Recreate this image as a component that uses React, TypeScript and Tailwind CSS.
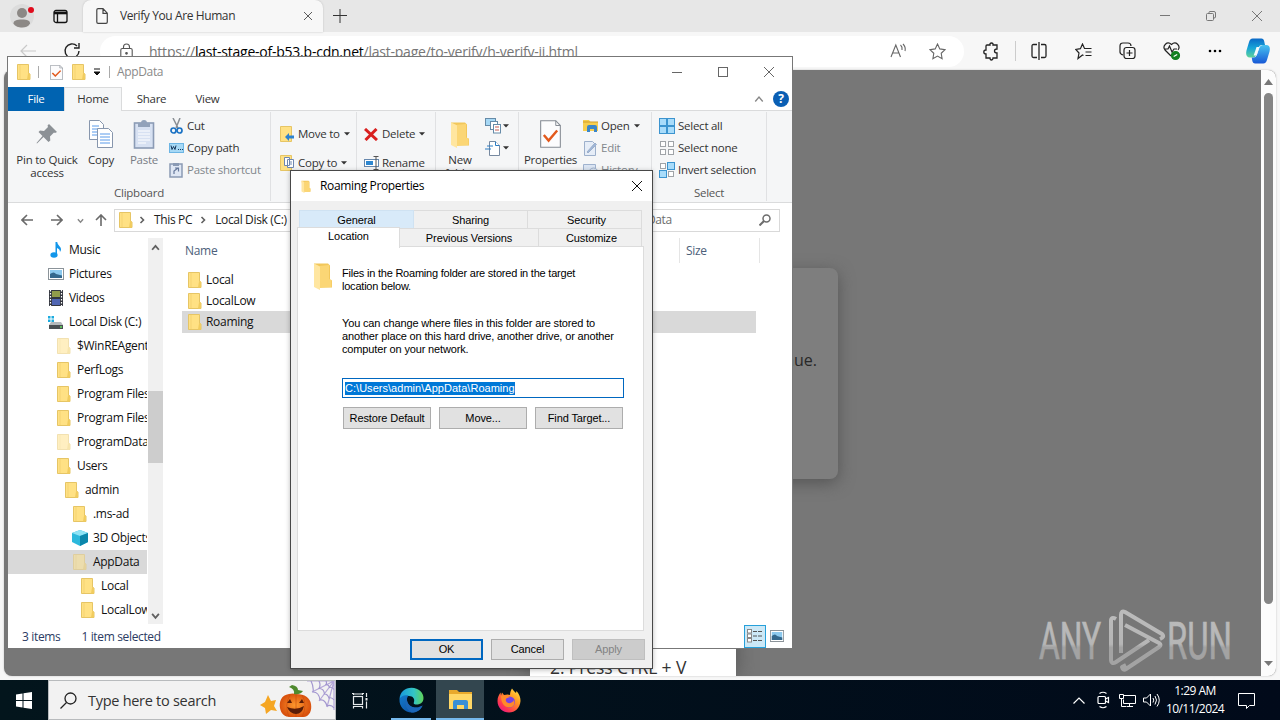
import React from 'react';

type IconProps = { className?: string };

// ---------- Folder icons ----------
const Folder: React.FC<{ faded?: boolean }> = ({ faded }) => (
  <svg width="16" height="16" viewBox="0 0 16 16" className={faded ? 'shrink-0 opacity-50' : 'shrink-0'}>
    <path d="M1.500.500h11v9l1.500.500v5.500h-12.500z" fill="#ffe184" stroke="#e6c565" />
    <path d="M12 9.500l1.500-.500.500 6.500H11z" fill="#f1cc5e" />
    <path d="M4 1v14" stroke="#f5d373" />
  </svg>
);

const OpenFolder: React.FC<{ width: number; height: number }> = ({ width, height }) => (
  <svg width={width} height={height} viewBox="0 0 20 28" preserveAspectRatio="none">
    <path d="M1 1.500h14l2 2v14l2 1v7H5z" fill="#f2c75b" />
    <path d="M1 1.500l6 3v23.500l-6-3z" fill="#ffe6a0" />
    <path d="M7 4l9-1v14l2.500 1v7L7 26z" fill="#fbd675" />
  </svg>
);

const Caret: React.FC<IconProps> = ({ className }) => (
  <svg width="6" height="4" viewBox="0 0 6 4" className={className}><path d="M0 .3h6L3 3.6z" fill="#333" /></svg>
);

const Chevron: React.FC<{ dir: 'up' | 'down' | 'right'; size?: number; color?: string; weight?: number }> = ({
  dir, size = 8, color = '#606060', weight = 1.6,
}) => {
  const paths = { up: 'M1 6l3-3.5L7 6', down: 'M1 2.5L4 6l3-3.5', right: 'M2.5 1l3 3-3 3' };
  return (
    <svg width={size} height={size} viewBox="0 0 8 8" fill="none" stroke={color} strokeWidth={weight} className="shrink-0">
      <path d={paths[dir]} />
    </svg>
  );
};

const CloseX: React.FC<{ size: number; color: string }> = ({ size, color }) => (
  <svg width={size} height={size} viewBox="0 0 10 10" stroke={color} strokeWidth="1"><path d="M0 0l10 10M10 0L0 10" /></svg>
);

const PropertiesDoc: React.FC<{ width: number; height: number }> = ({ width, height }) => (
  <svg width={width} height={height} viewBox="0 0 22 28" preserveAspectRatio="none" fill="none">
    <path d="M.7.7h15.8l4.8 4.8v21.8H.7z" fill="#fcfcfd" stroke="#858b93" strokeWidth="1.1" />
    <path d="M16.5.7v4.8h4.8" stroke="#858b93" />
    <path d="M4 15l5 5.5 9-10" stroke="#e2591c" strokeWidth="2.6" />
  </svg>
);

// ---------- Edge browser ----------
const toolIcon = 'fill-none stroke-[#222]';

const BrowserTabs: React.FC = () => (
  <div className="flex h-8 bg-[#e7e7e7] text-[#333]">
    <div className="flex w-[83px] items-center pl-[10px]">
      <svg width="27" height="28" viewBox="0 0 27 28">
        <circle cx="12" cy="14" r="12" fill="#dcdcdc" />
        <circle cx="12" cy="11" r="5" fill="#8c8885" />
        <path d="M3.500 21.500c0-3 3-4 8.500-4s8 1 8 4c-1.500 3-5 4-8 4s-7-1-8.500-4z" fill="#8c8885" />
        <circle cx="21" cy="8" r="3" fill="#e00b1c" />
      </svg>
      <svg width="15" height="15" viewBox="0 0 15 15" fill="none" stroke="#111" strokeWidth="1.3" className="ml-[16px]">
        <rect x="1" y="1.500" width="13" height="12" rx="2" /><path d="M1 4h13" strokeWidth="2.600" /><path d="M4.500 5v8" />
      </svg>
    </div>
    <div className="flex w-[240px] items-center rounded-t-lg bg-[#f7f7f7] pl-[13px] shadow-[0_0_2px_#bbb]">
      <svg width="12" height="16" viewBox="0 0 12 16" fill="none" stroke="#444" strokeWidth="1.200">
        <path d="M.8 2q0-1.300 1.300-1.300H7l4.300 4.500V14q0 1.300-1.300 1.300H2.100Q.8 15.300.8 14zM7 1v4.300h4" />
      </svg>
      <span className="ml-[12px] grow text-[12px] tracking-[-0.4px]">Verify You Are Human</span>
      <span className="mr-[11px]"><CloseX size={8} color="#333" /></span>
    </div>
    <svg width="14" height="14" viewBox="0 0 14 14" stroke="#333" className="ml-[10px] mt-[9px]"><path d="M7 0v14M0 6.500h14" /></svg>
    <div className="ml-auto flex items-center gap-[36px] pr-[18px]">
      <svg width="10" height="10" stroke="#777"><path d="M0 4.500h10" /></svg>
      <svg width="10" height="10" viewBox="0 0 10 10" fill="none" stroke="#777"><rect x=".5" y="2.500" width="7" height="7" rx="1" /><path d="M3 2.500V1.500q0-1 1-1h4q1.500 0 1.500 1.500v4q0 1-1.500 1" /></svg>
      <CloseX size={10} color="#777" />
    </div>
  </div>
);

const BrowserToolbar: React.FC = () => (
  <div className="flex h-[38px] items-center">
    <svg width="17" height="14" viewBox="0 0 17 14" fill="none" stroke="#c9c9c9" strokeWidth="1.200" className="ml-[20px]"><path d="M16 7H1M7 1L1 7l6 6" /></svg>
    <svg width="18" height="18" viewBox="0 0 18 18" fill="none" stroke="#222" strokeWidth="1.400" className="ml-[26px]"><path d="M16 9a7 7 0 1 1-2-5M16 1v5h-5" /></svg>
    <div className="ml-[19px] flex h-[31px] w-[864px] items-center rounded-full bg-white">
      <svg width="13" height="16" viewBox="0 0 13 16" fill="none" stroke="#555" strokeWidth="1.100" className="ml-[20px]">
        <rect x=".8" y="5.500" width="11.400" height="9.700" rx="1.500" /><path d="M3.500 5.500V4a3 3 0 0 1 6 0v1.500" /><circle cx="6.500" cy="10.300" r=".8" fill="#555" />
      </svg>
      <span className="ml-[16px] grow text-[14px] tracking-[-0.23px] text-[#777]">
        https://<span className="text-black">last-stage-of-b53.b-cdn.net</span>/last-page/to-verify/h-verify-ii.html
      </span>
      <svg width="17" height="16" viewBox="0 0 17 16" fill="none" stroke="#666" strokeWidth="1.100">
        <path d="M1 14L5.800 2 10.500 14M2.700 10h6.200M10.500 2q2 1.700 1.500 5M13 1q3 3 2 7" />
      </svg>
      <svg width="17" height="17" viewBox="0 0 17 17" fill="none" stroke="#666" strokeWidth="1.100" className="mr-[18px] ml-[22px]">
        <path d="M8.500 1l2.300 4.900 5.200.7-3.800 3.700.9 5.400-4.600-2.600-4.600 2.600.9-5.400L1 6.600l5.200-.7z" />
      </svg>
    </div>
    <div className="flex items-center pl-[19px]">
      <svg width="16" height="19" viewBox="0 0 16 19" strokeWidth="1.300" className={toolIcon}>
        <path d="M4 3h3q-.3-2 1.500-2T10 3h4v4q-2.500 0-2.500 2T14 11v5h-4q0 2-1.500 2T7 16H3v-4Q.8 12 .8 10T3 8V4q0-1 1-1z" />
      </svg>
      <div className="ml-[16px] mr-[15px] h-5 w-px bg-[#ccc]" />
      <svg width="16" height="18" viewBox="0 0 16 18" strokeWidth="1.300" className={toolIcon}>
        <path d="M6 2.500H2.500q-1.500 0-1.500 1.500v10q0 1.500 1.500 1.500H6M10 2.500h3.500q1.500 0 1.500 1.500v10q0 1.500-1.500 1.500H10M8 0v18" />
      </svg>
      <svg width="17" height="17" viewBox="0 0 17 17" strokeWidth="1.200" className="ml-[28px] fill-none stroke-[#222]">
        <path d="M8.500 12.500L7.500 12l-4.500 3.500 1-5.500L.8 6.500l4.600-.8L7.500 1l2 4.500h7M10.500 9h6M10.500 12.500h6" />
      </svg>
      <svg width="17" height="18" viewBox="0 0 17 18" strokeWidth="1.200" className="ml-[27px] fill-none stroke-[#222]">
        <path d="M4 13q-3-1-3-3V4q0-3 3-3h5q3 0 3 3" /><rect x="5" y="5.500" width="11" height="11" rx="2.500" /><path d="M10.500 8v6M7.500 11h6" />
      </svg>
      <svg width="18" height="20" viewBox="0 0 18 20" strokeWidth="1.200" className="ml-[27px] fill-none stroke-[#222]">
        <path d="M8 15L2 9C-1 5 4-.5 8.500 3.500 13-.5 18 5 15 9M1 8h4l1.500-3 2.500 6 2-3h3" />
        <circle cx="12.500" cy="14.500" r="4" fill="#138020" stroke="#138020" /><path d="M10.700 15.500l3.500-2" stroke="white" />
      </svg>
      <svg width="14" height="4" viewBox="0 0 14 4" className="ml-[27px]"><circle cx="2" cy="2" r="1.300" /><circle cx="7" cy="2" r="1.300" /><circle cx="12" cy="2" r="1.300" /></svg>
      <svg width="24" height="26" viewBox="0 0 25 26" preserveAspectRatio="none" className="ml-[24px]">
        <defs>
          <linearGradient id="cpA" x1="0" y1="0" x2="0" y2="1"><stop offset="0" stopColor="#0b69c7" /><stop offset=".5" stopColor="#17a5d8" /><stop offset="1" stopColor="#5fd39a" /></linearGradient>
          <linearGradient id="cpB" x1="0" y1="0" x2="0" y2="1"><stop offset="0" stopColor="#46c3f0" /><stop offset="1" stopColor="#1858d6" /></linearGradient>
        </defs>
        <path d="M7 .5h9q2.500 0 3 3l.8 3.500H16q-2 0-3 3l-2.500 7.500q-.8 2-3 2H4q-5 0-3.500-7l2.500-8Q4 .5 7 .5z" fill="url(#cpA)" />
        <path d="M17.500 7H21q5 0 3.500 6.500L22 21.500q-1 4-4 4H9.500q-2.500 0-3-3L6 19.500h2q2.500 0 3.500-3l2.500-7Q15 7 17.500 7z" fill="url(#cpB)" />
        <path d="M11 9h3l-3 8.500H8z" fill="#f3fbfd" />
      </svg>
    </div>
  </div>
);

const Watermark: React.FC = () => (
  <svg width="194" height="64" viewBox="0 0 194 64" className="absolute top-[539px] left-[1034px]" fill="none">
    <defs>
      <linearGradient id="wm" x1="0" y1="0" x2="0" y2="64" gradientUnits="userSpaceOnUse">
        <stop offset="0" stopColor="#bcbcbc" /><stop offset=".55" stopColor="#b6b6b6" /><stop offset=".6" stopColor="#a3a3a3" /><stop offset="1" stopColor="#a3a3a3" />
      </linearGradient>
    </defs>
    <g fill="url(#wm)" stroke="url(#wm)" strokeWidth=".7" fontFamily="Roboto, sans-serif" fontSize="52">
      <text x="1" y="50" textLength="62" lengthAdjust="spacingAndGlyphs">ANY</text>
      <text x="129" y="50" textLength="65" lengthAdjust="spacingAndGlyphs">RUN</text>
    </g>
    <g stroke="url(#wm)" strokeWidth="4" strokeLinejoin="round">
      <path d="M78 10q-5-3-5 2v38q0 6 5 3l33-22" />
      <path d="M83 44V6q0-5 4-3l37 22q3 3-2 5" />
      <path d="M87 16l34 18q3 2 0 4L88 60q-3 2-4-2l4-2" />
    </g>
  </svg>
);

const Browser: React.FC = () => (
  <div className="h-[680px] bg-[#f7f7f7]">
    <BrowserTabs />
    <BrowserToolbar />
    <div className="relative ml-1 flex h-[606px] w-[1272px] overflow-hidden rounded-lg bg-[#777] shadow-[0_0_2px_#bbb]">
      <div className="absolute top-[198px] left-[436px] flex h-[211px] w-[398px] items-center justify-end rounded-lg bg-[#7e7e7e] pr-[21px] pb-[27px] text-[16px] text-[#282828] shadow-[0_4px_16px_#555]">continue.</div>
      <div className="absolute top-[560px] left-[526px] h-[46px] w-[206px] bg-white pt-[24px] pl-[20px] text-[17.5px] leading-[26px] tracking-[-0.1px] text-[#333] shadow-[0_0_20px_#555]">2. Press CTRL + V</div>
      <Watermark />
      <div className="relative ml-auto flex w-[15px] flex-col items-center bg-[#fcfcfc] pt-[9px]">
        <svg width="9" height="6" viewBox="0 0 9 6"><path d="M0 6l4.500-6L9 6z" fill="#777" /></svg>
        <div className="mt-[8px] h-[511px] w-[9px] rounded-full bg-[#858585]" />
        <svg width="9" height="5" viewBox="0 0 9 5" className="mt-[57px]"><path d="M0 0h9L4.500 5z" fill="#777" /></svg>
      </div>
    </div>
  </div>
);

// ---------- Explorer ----------
const ExplorerTitle: React.FC = () => (
  <div className="flex h-[30px] items-center pl-[8px] text-[12px] text-[#8a8a8a]">
    <Folder />
    <div className="mx-[6px] h-[12px] w-px bg-[#aaa]" />
    <span className="ml-[5px]"><PropertiesDoc width={13} height={15} /></span>
    <span className="ml-[8px]"><Folder /></span>
    <svg width="8" height="8" viewBox="0 0 8 8" className="ml-[6px]"><path d="M1 1h6M1 4h6L4 7z" fill="#111" stroke="#111" strokeWidth="1" /></svg>
    <div className="ml-[8px] h-[12px] w-px bg-[#aaa]" />
    <span className="ml-[7px] tracking-[-0.35px]">AppData</span>
    <div className="ml-auto flex items-center gap-[36px] pr-[18px]">
      <svg width="10" height="10" stroke="#666"><path d="M0 5.500h10" /></svg>
      <svg width="10" height="10" fill="none" stroke="#666"><rect x=".5" y=".5" width="9" height="9" /></svg>
      <CloseX size={10} color="#666" />
    </div>
  </div>
);

const ExplorerTabs: React.FC = () => (
  <div className="flex h-[24px] items-stretch border-b border-[#dadbdc] text-[11.5px] leading-[23px] tracking-[-0.3px] text-[#333]">
    <div className="mb-[-1px] w-[56px] bg-[#0063b1] text-center text-white">File</div>
    <div className="mb-[-1px] w-[58px] border border-b-0 border-[#dadbdc] bg-[#f5f6f7] text-center leading-[21px]">Home</div>
    <div className="w-[59px] text-center">Share</div>
    <div className="w-[53px] text-center">View</div>
    <div className="ml-auto flex items-center gap-[9px] pr-[3px]">
      <Chevron dir="up" size={10} color="#888" weight={1.1} />
      <div className="h-4 w-4 rounded-full bg-[#0a5fb4] text-center text-[12px] leading-4 font-bold text-white">?</div>
    </div>
  </div>
);

const PinIcon = () => (
  <svg width="22" height="22" viewBox="0 0 22 22"><path d="M13 1l8 8-2 1-1-.5-4 4 .3 4L12.500 19l-5-5L1 20.500l-.5-.5 6-7-4-4L4 7.500l4 .5 4-4-.5-1.500z" fill="#8c9196" /></svg>
);

const CopyIcon = () => (
  <svg width="26" height="28" viewBox="0 0 26 28" fill="#fff" stroke="#8796ad">
    <path d="M1.500.5h10l4 4v15h-14z" /><path d="M4 6h7M4 9h7M4 12h5M4 15h5" stroke="#5b9bea" />
    <path d="M9.500 8.500h11l4 4v15h-15z" /><path d="M12 14h10M12 17h10M12 20h10M12 23h10" stroke="#5b9bea" />
  </svg>
);

const PasteIcon = () => (
  <svg width="22" height="30" viewBox="0 0 22 30" fill="none">
    <rect x="1.500" y="4" width="19" height="25" fill="#d7e1f2" stroke="#8b9bb5" strokeWidth="1.600" />
    <path d="M5 4h3q0-3 3-3t3 3h3v4H5z" fill="#92a2ba" />
    <path d="M5 12h12M5 15h12M5 18h12M5 21h12M5 24h8" stroke="#fff" />
  </svg>
);

const CutIcon = () => (
  <svg width="16" height="16" viewBox="0 0 16 16" fill="none"><path d="M4 0l5 10M11 0L7 10" stroke="#8a8f94" strokeWidth="1.500" /><circle cx="4.500" cy="12.500" r="2.500" stroke="#1b72c4" strokeWidth="1.700" /><circle cx="10.500" cy="12.500" r="2.500" stroke="#1b72c4" strokeWidth="1.700" /></svg>
);

const CopyPathIcon = () => (
  <svg width="16" height="10" viewBox="0 0 16 10" fill="none"><rect x=".5" y=".5" width="14" height="9" fill="#a6d8f5" stroke="#6cb5e4" /><path d="M2 2.500l1 4 1.500-3 1.500 3 1-4" stroke="#17385c" /><path d="M9 6.500h1M11 6.500h1M13 6.500h1" stroke="#17385c" /></svg>
);

const PasteShortcutIcon = () => (
  <svg width="14" height="16" viewBox="0 0 14 16" fill="none"><rect x="1" y="2" width="12" height="13" fill="#dfe7f4" stroke="#8a9ab4" strokeWidth="1.500" /><path d="M4 1h6v3H4z" fill="#8a9ab4" /><path d="M5 12V9l4-3M6 6h3.500v3.500" stroke="#66799b" strokeWidth="1.200" /></svg>
);

const BigButton: React.FC<{ icon: React.ReactNode; label: string; className: string }> = ({ icon, label, className }) => (
  <div className={`flex flex-col items-center ${className}`}>
    <div className="flex h-[38px] items-center">{icon}</div>
    <span className="w-min min-w-full text-center leading-[13px]">{label}</span>
  </div>
);

const SmallRow: React.FC<{ icon: React.ReactNode; label?: string; caret?: boolean; dim?: boolean }> = ({ icon, label, caret, dim }) => (
  <div className="flex h-[22px] items-center">
    <span className="flex w-[18px] shrink-0 items-center">{icon}</span>
    {label && <span className={dim ? 'text-[#81868c]' : ''}>{label}</span>}
    {caret && <Caret className={label ? 'ml-[4px]' : ''} />}
  </div>
);

const FolderAction: React.FC<{ copy?: boolean }> = ({ copy }) => (
  <svg width="15" height="16" viewBox="0 0 15 16">
    <path d="M.5.500h11v15H.5z" fill="#ffe184" stroke="#e6c565" />
    {copy
      ? <path d="M4.500 2.500h5v8h-5zM7.500 4.500h6v8h-6zM9 7h3M9 9h3" fill="#fff" stroke="#6e87b0" />
      : <path d="M5 11l4-4v2.500h5v3H9V15z" fill="#2c82cf" />}
  </svg>
);

const selectCells = [[0, 0], [8, 0], [0, 8], [8, 8]];
const SelectIcon: React.FC<{ filled: boolean[] }> = ({ filled }) => (
  <svg width="16" height="16" viewBox="0 0 16 16">
    {selectCells.map(([x, y], i) => (
      <rect key={i} x={x + (filled[i] ? 0.5 : 1.5)} y={y + (filled[i] ? 0.5 : 1.5)} width={filled[i] ? 7 : 5} height={filled[i] ? 7 : 5}
        fill={filled[i] ? '#a9dcfa' : '#fff'} stroke={filled[i] ? '#3c94cf' : '#a0a4a8'} />
    ))}
  </svg>
);

const Ribbon: React.FC = () => (
  <div className="flex h-[92px] border-b border-[#dadbdc] bg-[#f5f6f7] py-px text-[11.5px] tracking-[-0.25px] text-[#333]">
    <div className="flex w-[263px] flex-col border-r border-[#e0e1e3]">
      <div className="flex h-[73px] pt-[3px] pl-[4px]">
        <BigButton icon={<PinIcon />} label="Pin to Quick access" className="w-[70px]" />
        <BigButton icon={<CopyIcon />} label="Copy" className="w-[38px]" />
        <BigButton icon={<PasteIcon />} label="Paste" className="ml-[2px] w-[44px] text-[#777c85]" />
        <div className="ml-[3px] [&_span:first-child]:w-[18px]">
          <SmallRow icon={<CutIcon />} label="Cut" />
          <SmallRow icon={<CopyPathIcon />} label="Copy path" />
          <SmallRow icon={<PasteShortcutIcon />} label="Paste shortcut" dim />
        </div>
      </div>
      <span className="text-center leading-[15px] text-[#555]">Clipboard</span>
    </div>
    <div className="flex w-[86px] flex-col gap-[7px] border-r border-[#e0e1e3] pt-[11px] pl-[9px]">
      <SmallRow icon={<FolderAction />} label="Move to" caret />
      <SmallRow icon={<FolderAction copy />} label="Copy to" caret />
    </div>
    <div className="flex w-[79px] flex-col gap-[7px] border-r border-[#e0e1e3] pt-[11px] pl-[7px]">
      <SmallRow icon={<svg width="14" height="13" viewBox="0 0 14 13" stroke="#d9201f" strokeWidth="3"><path d="M1 1l12 11M12.500 1L1.500 12" /></svg>} label="Delete" caret />
      <SmallRow icon={<svg width="16" height="14" viewBox="0 0 16 14" fill="none"><rect x=".5" y="3.500" width="14" height="7" fill="#fff" stroke="#6788ad" /><path d="M2 5h7v4H2z" fill="#2e87d0" /><path d="M9.500.5h5M12 1v12M9.500 13.500h5" stroke="#555" /></svg>} label="Rename" />
    </div>
    <div className="flex w-[83px] border-r border-[#e0e1e3] pt-[3px] pl-[4px]">
      <BigButton icon={<OpenFolder width={20} height={27} />} label="New folder" className="w-[40px]" />
      <div className="ml-[5px]">
        <SmallRow icon={<svg width="17" height="16" viewBox="0 0 17 16" fill="#fff" stroke="#668ba8"><rect x=".5" y=".5" width="10" height="7" fill="#a6d8f5" /><rect x="5.500" y="3.500" width="7" height="8" /><rect x="8.500" y="6.500" width="7" height="8.500" /><path d="M10 9h4M10 12h4" stroke="#c65b50" /></svg>} caret />
        <SmallRow icon={<svg width="15" height="16" viewBox="0 0 15 16" fill="#fff" stroke="#7789a0"><path d="M4.500 1.500h6l4 4v10h-10z" /><path d="M10.500 1.500v4h4M0 9h6M2 6h6" stroke="#2c7dc3" /></svg>} caret />
      </div>
    </div>
    <div className="flex w-[133px] border-r border-[#e0e1e3] pt-[3px] pl-[3px]">
      <BigButton icon={<PropertiesDoc width={21} height={28} />} label="Properties" className="w-[57px]" />
      <div className="ml-[4px]">
        <SmallRow icon={<svg width="16" height="14" viewBox="0 0 16 14"><path d="M0 1h6l1.500 2H15v9H0z" fill="#f7ce4f" /><path d="M0 3h15" stroke="#cf9d2a" /><path d="M4 13V8q0-2 2-2h6q2 0 2 2v5h-3v-3H7v3z" fill="#3b86c8" /></svg>} label="Open" caret />
        <SmallRow icon={<svg width="14" height="16" viewBox="0 0 14 16" fill="#e6edf7" stroke="#9db0cb"><path d="M1.500 1.500h8l3 3v11h-11z" /><path d="M4 12l8-9 1.500 1.500L5 13z" fill="#9fb6d8" /></svg>} label="Edit" dim />
        <SmallRow icon={<svg width="16" height="15" viewBox="0 0 16 15" fill="#dbe5f3" stroke="#9fb2ce"><path d="M.5 1.500h12v11H.5z" /><circle cx="10.500" cy="9.500" r="4.500" /></svg>} label="History" dim />
      </div>
    </div>
    <div className="flex w-[115px] flex-col border-r border-[#e0e1e3]">
      <div className="flex h-[73px] flex-col pt-[3px] pl-[7px] [&_span:first-child]:w-[19px]">
        <SmallRow icon={<SelectIcon filled={[true, true, true, true]} />} label="Select all" />
        <SmallRow icon={<SelectIcon filled={[false, false, false, false]} />} label="Select none" />
        <SmallRow icon={<SelectIcon filled={[false, true, true, false]} />} label="Invert selection" />
      </div>
      <span className="text-center leading-[15px] text-[#555]">Select</span>
    </div>
  </div>
);

const Arrow: React.FC<{ d: string }> = ({ d }) => (
  <svg width="12" height="12" viewBox="0 0 12 12" fill="none" stroke="#6a6a6a" strokeWidth="1.600"><path d={d} /></svg>
);

const AddressRow: React.FC = () => (
  <div className="flex h-[34px] items-center text-[12px] tracking-[-0.35px] text-[#222]">
    <div className="flex w-[106px] items-center pl-[13px]">
      <Arrow d="M12 6H1M6 1L1 6l5 5" />
      <span className="mr-[14px] ml-[18px]"><Arrow d="M0 6h11M6 1l5 5-5 5" /></span>
      <Chevron dir="down" size={7} color="#888" />
      <span className="ml-[11px]"><Arrow d="M6 12V1M1 6l5-5 5 5" /></span>
    </div>
    <div className="flex h-[23px] w-[430px] items-center border border-[#d9d9d9] pl-[3px]">
      <Folder />
      <span className="mr-[8px] ml-[4px]"><Chevron dir="right" /></span>
      This PC
      <span className="mr-[8px] ml-[7px]"><Chevron dir="right" /></span>
      Local Disk (C:)
    </div>
    <div className="ml-[8px] flex h-[23px] w-[228px] items-center justify-between border border-[#d9d9d9] pr-[8px] pl-[34px] text-[#6d6d6d]">
      <span>Search AppData</span>
      <svg width="12" height="12" viewBox="0 0 12 12" fill="none" stroke="#6d6d6d" strokeWidth="1.500"><circle cx="7.500" cy="4.500" r="3.500" /><path d="M5 7l-4.500 4.500" strokeWidth="2" /></svg>
    </div>
  </div>
);

const MusicIcon = () => (
  <svg width="16" height="16" viewBox="0 0 16 16"><ellipse cx="6" cy="13" rx="3.600" ry="2.800" fill="#1296ea" /><path d="M7.500 0h1.700q0 2 2.500 4.500T12 10q0-3-3-4v7H7.500z" fill="#1296ea" /></svg>
);
const PicturesIcon: React.FC<{ width?: number }> = ({ width = 16 }) => (
  <svg width={width} height="12" viewBox="0 0 16 12" preserveAspectRatio="none"><rect x=".5" y=".5" width="15" height="11" fill="#fff" stroke="#8b9399" /><path d="M2 2h12v8H2z" fill="#8cc9ee" /><path d="M2 6q4-3 6 0l6 1.500V10H2z" fill="#34688d" /></svg>
);
const VideosIcon = () => (
  <svg width="16" height="16" viewBox="-1 0 16 16"><path d="M0 0h14v16H0z" fill="#33363f" /><path d="M3 1h8v6H3z" fill="#909b4b" /><path d="M3 9h8v6H3z" fill="#4f65b2" /><path d="M1.500 0v16M12.500 0v16" stroke="#fff" strokeWidth="1.200" strokeDasharray="1.500 1.500" /></svg>
);
const DiskIcon = () => (
  <svg width="16" height="13" viewBox="0 0 16 13"><path d="M0 0h2.500v2.500H0zM3.500 0H6v2.500H3.500zM0 3.500h2.500V6H0zM3.500 3.500H6V6H3.500z" fill="#1cabdf" /><path d="M3 6h10l2 3H1z" fill="#b6babd" /><path d="M1 9h14v4H1z" fill="#4b5054" /><path d="M12 11h2" stroke="#64e05b" strokeWidth="1.500" /></svg>
);
const CubeIcon = () => (
  <svg width="16" height="16" viewBox="0 0 16 16"><path d="M8 0l8 3v9l-8 4-8-4V3z" fill="#2cb8dc" /><path d="M8 0l8 3-8 3-8-3z" fill="#8fe3f5" /><path d="M8 6l8-3v9l-8 4z" fill="#0b86ab" /></svg>
);

type TreeItem = { label: string; indent: string; icon?: React.ReactNode; faded?: boolean; selected?: boolean };

const treeItems: TreeItem[] = [
  { label: 'Music', indent: 'pl-[40px]', icon: <MusicIcon /> },
  { label: 'Pictures', indent: 'pl-[40px]', icon: <PicturesIcon /> },
  { label: 'Videos', indent: 'pl-[40px]', icon: <VideosIcon /> },
  { label: 'Local Disk (C:)', indent: 'pl-[40px]', icon: <DiskIcon /> },
  { label: '$WinREAgent', indent: 'pl-[48px]', faded: true },
  { label: 'PerfLogs', indent: 'pl-[48px]' },
  { label: 'Program Files', indent: 'pl-[48px]' },
  { label: 'Program Files (x86)', indent: 'pl-[48px]' },
  { label: 'ProgramData', indent: 'pl-[48px]', faded: true },
  { label: 'Users', indent: 'pl-[48px]' },
  { label: 'admin', indent: 'pl-[56px]' },
  { label: '.ms-ad', indent: 'pl-[64px]' },
  { label: '3D Objects', indent: 'pl-[64px]', icon: <CubeIcon /> },
  { label: 'AppData', indent: 'pl-[64px]', faded: true, selected: true },
  { label: 'Local', indent: 'pl-[72px]' },
  { label: 'LocalLow', indent: 'pl-[72px]' },
];

const ExplorerBody: React.FC = () => (
  <div className="flex h-[387px] pt-px text-[12px] tracking-[-0.3px] text-[#111]">
    <div className="w-[139px] overflow-hidden">
      {treeItems.map(item => (
        <div key={item.label} className={`flex h-6 items-center whitespace-nowrap ${item.indent} ${item.selected ? 'bg-[#d9d9d9]' : ''}`}>
          <span className="flex w-[21px] shrink-0 items-center">{item.icon ?? <Folder faded={item.faded} />}</span>
          {item.label}
        </div>
      ))}
    </div>
    <div className="ml-px flex w-[15px] flex-col items-center bg-[#f0f0f0] pt-[5px]">
      <Chevron dir="up" size={9} />
      <div className="mt-[139px] h-[72px] w-full bg-[#cdcdcd]" />
      <span className="mt-auto pb-[4px]"><Chevron dir="down" size={9} /></span>
    </div>
    <div className="ml-[19px] flex-1">
      <div className="flex h-[25px] items-center text-[#4c607a]">
        <span className="w-[497px] pl-[3px]">Name</span>
        <span className="flex h-full w-[81px] items-center border-x border-[#e5e5e5] pl-[6px]">Size</span>
      </div>
      <div className="mt-[6px] w-[574px]">
        {['Local', 'LocalLow', 'Roaming'].map(name => (
          <div key={name} className={name === 'Roaming' ? 'flex h-[22px] items-center bg-[#d9d9d9] pl-[5px]' : 'flex h-[21px] items-center pl-[5px]'}>
            <Folder /><span className="ml-[3px]">{name}</span>
          </div>
        ))}
      </div>
    </div>
  </div>
);

const Explorer: React.FC = () => (
  <div className="absolute top-[56px] left-[7px] h-[593px] w-[786px] border border-[#777] bg-white">
    <ExplorerTitle />
    <ExplorerTabs />
    <Ribbon />
    <AddressRow />
    <ExplorerBody />
    <div className="flex h-[24px] items-center pl-[14px] text-[12px] tracking-[-0.35px] text-[#2b3b63]">
      <span className="pt-[2px]">3 items</span>
      <span className="pt-[2px] ml-[21px]">1 item selected</span>
      <div className="ml-auto flex h-[23px] w-[22px] items-center justify-center border border-[#26a0da] bg-[#cce8f6]">
        <svg width="16" height="14" viewBox="0 0 16 14" fill="#fff" stroke="#888"><rect x=".5" y=".5" width="4" height="3.500" /><rect x=".5" y="5" width="4" height="3.500" /><rect x=".5" y="9.500" width="4" height="3.500" /><path d="M6 2.500h4M11 2.500h4M6 7h4M11 7h4M6 11.500h4M11 11.500h4" stroke="#555" /></svg>
      </div>
      <span className="mr-[8px] ml-[4px]"><PicturesIcon width={14} /></span>
    </div>
  </div>
);

// ---------- Roaming Properties dialog ----------
const DialogButton: React.FC<{ label: string; className: string }> = ({ label, className }) => (
  <button className={`flex items-center justify-center border ${className}`}>{label}</button>
);

const RoamingDialog: React.FC = () => (
  <div className="absolute top-[170px] left-[290px] flex h-[499px] w-[363px] flex-col border border-[#484848] bg-[#f0f0f0] font-['Liberation_Sans',sans-serif] text-[11px] tracking-[-0.1px] text-black shadow-[0_1px_5px_#0004]">
    <div className="flex h-[30px] items-center bg-white pl-[10px] font-['Open_Sans',sans-serif] text-[12px] tracking-[-0.36px]">
      <OpenFolder width={10} height={13} />
      <span className="ml-[9px] grow">Roaming Properties</span>
      <span className="mr-[10px] mb-px"><CloseX size={10} color="#111" /></span>
    </div>
    <div className="mt-[9px] flex h-[18px] px-[8px] text-center leading-[18px]">
      <div className="w-[115px] border border-b-0 border-[#cfe2f2] bg-[#d8eaf9]">General</div>
      <div className="w-[114px] border-t border-r border-[#dcdcdc]">Sharing</div>
      <div className="w-[114px] border-t border-r border-[#dcdcdc] pl-1">Security</div>
    </div>
    <div className="relative z-10 -mt-px flex h-[20px] px-[6px] text-center leading-[18px]">
      <div className="-mb-px w-[103px] border border-b-0 border-[#dcdcdc] bg-white leading-[16px]">Location</div>
      <div className="mt-px w-[139px] border-t border-r border-b border-[#dcdcdc] leading-[19px]">Previous Versions</div>
      <div className="mt-px w-[103px] border-t border-r border-b border-[#dcdcdc] pl-[3px] leading-[19px]">Customize</div>
    </div>
    <div className="mx-[6px] -mt-px flex h-[385px] w-[347px] border border-[#dcdcdc] bg-white pt-[15px] pl-[15px]">
      <OpenFolder width={20} height={28} />
      <div className="ml-[9px] leading-[13px]">
        <p className="mt-[5px] tracking-[-0.22px]">Files in the Roaming folder are stored in the target<br />location below.</p>
        <p className="mt-[24px] tracking-[-0.15px]">You can change where files in this folder are stored to<br />another place on this hard drive, another drive, or another<br />computer on your network.</p>
        <div className="mt-[22px] flex h-[20px] w-[282px] items-center border border-[#0067c0] pl-[2px]">
          <span className="bg-[#0078d7] tracking-[0.03px] text-white">C:\Users\admin\AppData\Roaming</span>
        </div>
        <div className="mt-[9px] ml-px flex gap-[8px]">
          {['Restore Default', 'Move...', 'Find Target...'].map(label => (
            <DialogButton key={label} label={label} className="h-[22px] w-[88px] border-[#adadad] bg-[#e1e1e1]" />
          ))}
        </div>
      </div>
    </div>
    <div className="mt-[8px] flex justify-end gap-[8px] pr-[7px]">
      <DialogButton label="OK" className="h-[21px] w-[73px] border-[#0067c0] bg-[#e1e1e1] inset-ring inset-ring-[#0067c0]" />
      <DialogButton label="Cancel" className="h-[21px] w-[73px] border-[#adadad] bg-[#e1e1e1]" />
      <DialogButton label="Apply" className="h-[21px] w-[73px] border-[#bfbfbf] bg-[#cccccc] text-[#838383]" />
    </div>
  </div>
);

// ---------- Taskbar ----------
const Pumpkin: React.FC = () => (
  <svg width="76" height="38" viewBox="0 0 76 38" fill="none">
    <defs>
      <radialGradient id="pk"><stop offset="0" stopColor="#ff9a2e" /><stop offset="1" stopColor="#d9520e" /></radialGradient>
    </defs>
    <path d="M9 14l3 6 5-1-2 6 3 5-6-1-5 4-1-6-5-3 5-3z" fill="#f5a623" />
    <path d="M37 13q-3-1-7 0c-8 1-10 8-9 14s5 9 10 9h14c6-1 8-7 7-13s-6-10-15-10z" fill="url(#pk)" />
    <path d="M31 14q-6 10-1 22M43 14q6 10 0 22M37 14v22" stroke="#c9470c" opacity=".6" />
    <path d="M35 13q1-5-5-7l3-2q6 1 6 5l5 1q-3 4-9 3z" fill="#4f8a2e" />
    <path d="M28 22l3-4 2 4zM40 22l3-4 2 4zM28 26q9 4 17-1-2 8-8 8t-9-7z" fill="#5b1d07" />
    <path d="M75 0H48M75 0L53 11M75 0L60 20M75 0l-7 26M75 0v29" stroke="#b3a6d8" strokeWidth="1.200" />
    <path d="M67 0q1 2 0 3.500 3 0 3.500 3 2.500-1 4.500 2M60 0q2 4 0 7.500 5 0 5.500 5.500 3 0 4.500 4 3-1 5 2M52 0q3 6 2 11 6 0 7 8 5-1 7 6 4-2 7 2" stroke="#a296cf" strokeWidth="1.200" />
  </svg>
);

const EdgeLogo = () => (
  <svg width="25" height="26" viewBox="0 0 25 26">
    <defs>
      <linearGradient id="edA" x1="0" x2="1"><stop offset="0" stopColor="#1797dd" /><stop offset=".6" stopColor="#33c5c5" /><stop offset="1" stopColor="#61d457" /></linearGradient>
      <linearGradient id="edB" x1="0" y1="0" x2="1" y2="1"><stop offset="0" stopColor="#1479ca" /><stop offset="1" stopColor="#0b4b9f" /></linearGradient>
    </defs>
    <path d="M.5 12C1 5 6 .8 12.500.8 20 .8 24.500 6 24.500 11c0 5-4 6.500-7 6.500s-3-1-2.500-2.500c1-3-1-6-5-6S2 10 .5 12z" fill="url(#edA)" />
    <path d="M.5 12C2 8.500 6 7.500 9.500 8.500c-3 2-2 11 6 12 4 .5 6-1 8-2-2 4.500-6 7-11 7C6 25.500 0 20 .5 12z" fill="url(#edB)" />
    <path d="M9.500 8.500C5 11 5 22 12.500 25.500h2c5-.5 8-4 9-7-2 1-4 2.500-8 2-8-1-9-10-6-12z" fill="#1b66b8" />
  </svg>
);

const FirefoxLogo = () => (
  <svg width="24" height="25" viewBox="0 0 24 25">
    <defs>
      <linearGradient id="ff" x1="1" y1="0" x2=".2" y2="1"><stop offset="0" stopColor="#fff04a" /><stop offset=".4" stopColor="#ff9b22" /><stop offset=".8" stopColor="#ff3750" /><stop offset="1" stopColor="#e5178a" /></linearGradient>
    </defs>
    <path d="M15 .5q2 3 4 4.500l.5-2c3 3 4 7 4 10C23 20 18 24.500 12 24.500S.5 20 .5 13c0-4 1.500-6 3-8.500l.5 3 1-3L7 7q4-1 6 0c0-3 1-5 2-6.500z" fill="url(#ff)" />
    <circle cx="12.500" cy="14" r="5.500" fill="#7542e5" />
    <path d="M4 8q4-2 9 1c-2 1-5 1-4 4s6 3 8-1c2 7-3 8-7 7s-6-6-6-11z" fill="#ff8a2a" />
  </svg>
);

const Taskbar: React.FC = () => (
  <div className="flex h-10 items-stretch bg-linear-to-r from-[#03151c] to-[#010a1a] text-white">
    <div className="flex w-12 items-center justify-center">
      <svg width="16" height="17" viewBox="0 0 16 17" fill="#fff"><path d="M0 2.500l6.500-1V8H0zM7.500 1.300L16 0v8H7.500zM0 9h6.500v6.500L0 14.500zM7.500 9H16v8l-8.500-1.300z" /></svg>
    </div>
    <div className="flex w-[288px] items-center border border-[#b8bbbd] bg-[#f2f2f2] pl-[11px] text-[#333]">
      <svg width="17" height="17" viewBox="0 0 17 17" fill="none" stroke="#222" strokeWidth="1.300"><circle cx="10.500" cy="6.500" r="5.500" /><path d="M6.500 10.500L.5 16.500" /></svg>
      <span className="ml-[11px] grow pt-[2px] text-[14.5px] tracking-[-0.28px]">Type here to search</span>
      <Pumpkin />
    </div>
    <div className="flex w-[48px] items-center justify-center">
      <svg width="16" height="17" viewBox="0 0 16 17" fill="none" stroke="#e6eaec" strokeWidth="1.200"><rect x="1.500" y="4.500" width="9" height="8" /><path d="M0 1.500h2M1.500 1v2M12 1.500h-2M10.500 1v2M1.500 2h9M1.500 14.500h9M1.500 14v2.500M10.500 14v2.500M14.500 1v4M14.500 9.500v7" /><path d="M13.500 6h2v2.500h-2z" fill="#e6eaec" stroke="none" /></svg>
    </div>
    <div className="mx-[7px] flex w-[40px] items-center justify-center border-b-2 border-[#76b9ed] pt-[2px]"><EdgeLogo /></div>
    <div className="-ml-[2px] flex w-[48px] items-center justify-center border-b-2 border-[#76b9ed] bg-[#33464f] pt-[2px]">
      <svg width="23" height="20" viewBox="0 0 23 20"><path d="M0 0h8l2 2h13v17H0z" fill="#e8a92c" /><path d="M0 4h23v15H0z" fill="#ffd766" /><path d="M4 19v-7q0-2 2-2h11q2 0 2 2v7h-4v-4H8v4z" fill="#3a8fd6" /></svg>
    </div>
    <div className="ml-[13px] flex items-center"><FirefoxLogo /></div>
    <div className="ml-auto flex items-center">
      <svg width="12" height="7" viewBox="0 0 12 7" fill="none" stroke="#fff" strokeWidth="1.200"><path d="M.5 6.500L6 1l5.500 5.500" /></svg>
      <svg width="13" height="18" viewBox="0 0 13 18" fill="none" stroke="#fff" strokeWidth="1.200" className="ml-[12px]"><rect x="1" y="5.500" width="7.500" height="7" rx="1" /><path d="M8.500 8l3-1.500v5L8.500 10M2.500 2.500Q6 0 9.500 2.500M2.500 15.500Q6 18 9.500 15.500" /></svg>
      <svg width="17" height="15" viewBox="0 0 17 15" fill="none" stroke="#fff" className="ml-[9px]"><path d="M5 2.500h11.500v8H4.500v-4M8 13.500h6M10.500 11v2.500M.5 1.500h4v4h-4zM2.500 5.500v8h5" /></svg>
      <svg width="17" height="15" viewBox="0 0 17 15" fill="none" stroke="#fff" className="ml-[7px]"><path d="M.5 5h3l4-4v12l-4-4h-3zM10 5q1.500 2 0 4.500M12 3q3 4 0 8.500M14 1q4.500 6 0 12.500" /></svg>
      <div className="ml-[5px] w-[60px] text-center text-[12px] leading-[18px] tracking-[-0.55px] whitespace-nowrap">1:29 AM<br />10/11/2024</div>
      <svg width="17" height="17" viewBox="0 0 17 17" fill="none" stroke="#fff" className="mr-[25px] ml-[13px]"><path d="M.5 1.500h16v12h-5l-3 3v-3h-8z" /></svg>
    </div>
  </div>
);

const App: React.FC = () => (
  <div className="relative h-[720px] w-[1280px] overflow-hidden font-['Open_Sans',sans-serif] select-none">
    <Browser />
    <Explorer />
    <RoamingDialog />
    <Taskbar />
  </div>
);

export default App;
